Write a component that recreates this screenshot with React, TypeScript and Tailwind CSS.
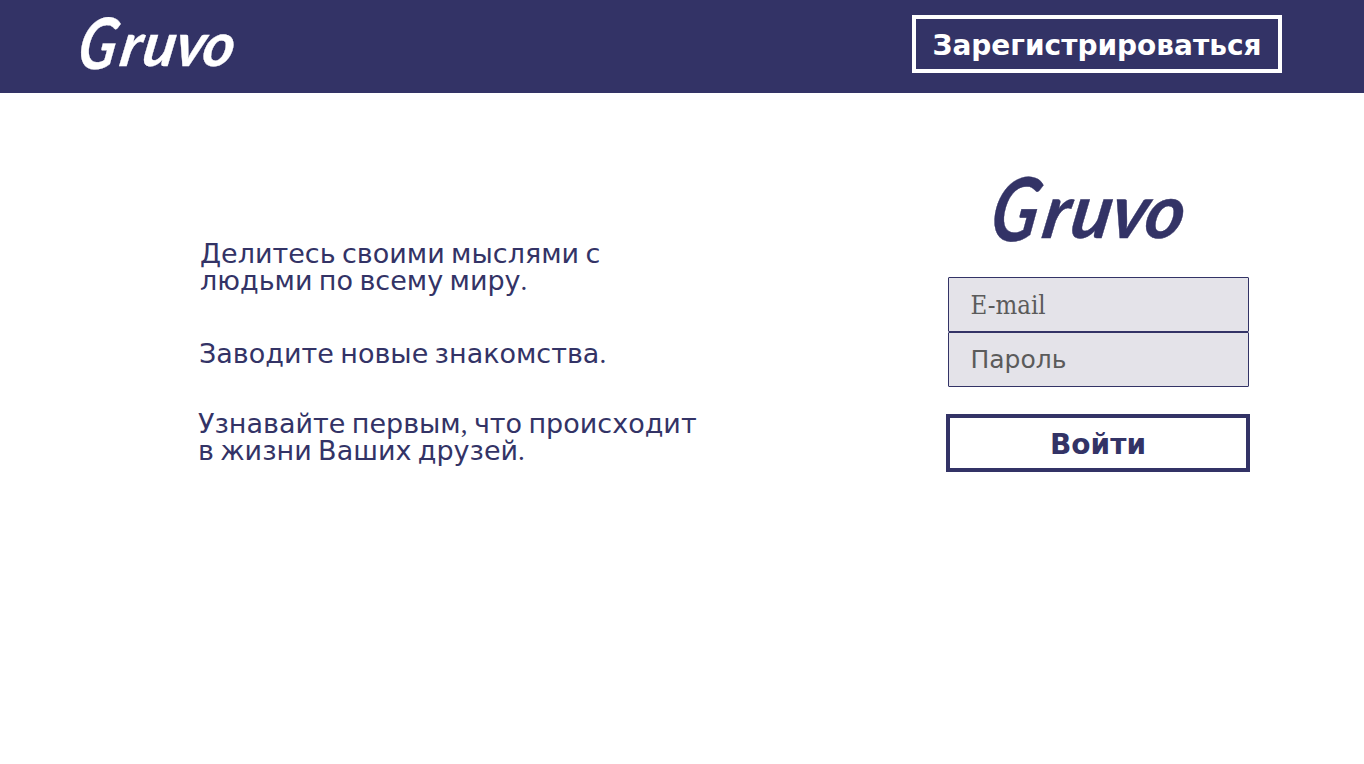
import React from "react";

function Mark({ char }: { char: string }) {
  return <span className="font-['Liberation_Serif',serif] leading-[0]">{char}</span>;
}

function Wordmark({ className }: { className: string }) {
  return (
    <svg viewBox="0 0 192 68" className={className} role="img" aria-label="Gruvo">
      <g
        fill="currentColor"
        stroke="currentColor"
        strokeWidth="0.4"
        className="font-['Lato',sans-serif] font-bold italic"
      >
        <text x="-4" y="65" fontSize="88" textLength="47" lengthAdjust="spacingAndGlyphs" transform="translate(10 0) skewX(-10)">G</text>
        <text x="49 77 117 151" y="62" fontSize="75" transform="translate(9 0) skewX(-10)">ruvo</text>
      </g>
    </svg>
  );
}

export default function App() {
  return (
    <div className="min-h-screen bg-white font-['DejaVu_Sans',sans-serif] text-[#333366]">
      <header className="flex h-[93px] items-start justify-between bg-[#333366] pl-20 pr-[82px] pt-[15px] text-white">
        <Wordmark className="mt-px h-[55px] w-[155px] overflow-visible" />
        <button className="h-[58px] w-[370px] border-4 border-white pt-[3px] text-[28px] font-bold leading-none">
          Зарегистрироваться
        </button>
      </header>
      <main className="flex items-start">
        <section className="ml-[198px] w-[520px] pt-[147px] text-[27px] leading-[27px] [word-spacing:-2.2px]">
          <p className="pl-0.5">
            Делитесь своими мыслями с<br />
            людьми по всему миру<Mark char="." />
          </p>
          <p className="mt-[46px] pl-px">
            Заводите новые знакомства<Mark char="." />
          </p>
          <p className="mt-[43px]">
            Узнавайте первым<Mark char="," /> что происходит<br />
            в жизни Ваших друзей<Mark char="." />
          </p>
        </section>
        <form className="ml-[228px] flex w-[304px] flex-col items-center pt-[83px]">
          <Wordmark className="mr-[18px] h-[68px] w-[192px] overflow-visible" />
          <div className="mt-[33px] flex w-[301px] flex-col">
            <input
              type="email"
              placeholder="E-mail"
              className="h-[55px] rounded-[1px] border border-[#333366] bg-[#e4e3e9] px-[22px] font-['DejaVu_Serif_Condensed','DejaVu_Serif',serif] text-[25.5px] [font-stretch:condensed] placeholder:text-[#5b5b5b]"
            />
            <input
              type="password"
              placeholder="Пароль"
              className="h-[55px] rounded-[1px] border border-[#333366] bg-[#e4e3e9] px-[22px] text-[25px] placeholder:text-[#5b5b5b]"
            />
          </div>
          <button type="button" className="mt-[27px] h-[58px] w-[304px] border-4 border-[#333366] pt-[3px] text-[28px] font-bold leading-none">
            Войти
          </button>
        </form>
      </main>
    </div>
  );
}
